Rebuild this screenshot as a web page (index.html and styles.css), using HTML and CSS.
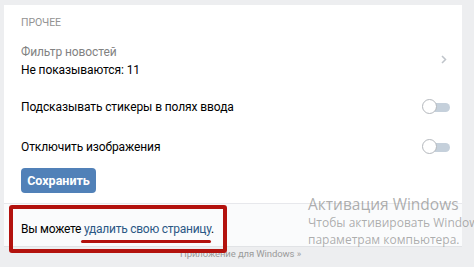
FILE: index.html
```html
<!DOCTYPE html>
<html lang="ru">
<head>
    <meta charset="UTF-8">
    <title>Настройки</title>
    <link rel="stylesheet" href="styles.css">
</head>
<body>
<div class="page">
    <div class="card">
        <div class="head">Прочее</div>
        <div class="row filter">
            <div>
                <div class="label">Фильтр новостей</div>
                <div class="value">Не показываются: 11</div>
            </div>
            <svg class="chevron" width="6" height="9" viewBox="0 0 6 9">
                <path d="M1 1l3.5 3.5L1 8" fill="none" stroke="#bfc4ca" stroke-width="1.5"/>
            </svg>
        </div>
        <div class="row toggle-row">
            <span>Подсказывать стикеры в полях ввода</span>
            <span class="toggle"><span class="knob"></span></span>
        </div>
        <div class="row toggle-row">
            <span>Отключить изображения</span>
            <span class="toggle"><span class="knob"></span></span>
        </div>
        <button class="save">Сохранить</button>
    </div>
    <div class="delete">
        Вы можете <a href="javascript:;">удалить свою страницу</a>.
    </div>
    <div class="footer">Приложение для Windows »</div>
</div>

<div class="mark-box"></div>
<div class="mark-line"></div>

<div class="activation">
    <div class="act-title">Активация Windows</div>
    <div class="act-text">Чтобы активировать Windows, перейдите к</div>
    <div class="act-text">параметрам компьютера.</div>
</div>
</body>
</html>
```

FILE: styles.css
```css
body {
    margin: 0;
    background-color: #edeef0;
    font-family: Roboto, "Liberation Sans", sans-serif;
    font-size: 12px;
    letter-spacing: -0.1px;
    color: #000;
    overflow: hidden;
}

a {
    text-decoration: none;
    color: #2a5885;
}

.page {
    padding: 5px 12px 0 4px;
}

.card {
    background-color: #fff;
    padding: 10px 12px 10px 17px;
}

.head {
    line-height: 16px;
    font-size: 10.5px;
    text-transform: uppercase;
    color: #939393;
}

.row {
    display: flex;
    align-items: center;
    justify-content: space-between;
}

.filter {
    margin-top: 12px;
    line-height: 18px;
}

.filter .label {
    color: #828282;
}

.chevron {
    margin-right: 3px;
    margin-bottom: 4px;
}

.toggle-row {
    height: 40px;
}

.filter + .toggle-row {
    margin-top: 8px;
}

.toggle {
    position: relative;
    width: 27px;
    height: 9px;
    border-radius: 5px;
    background-color: #c5d0db;
}

.toggle .knob {
    position: absolute;
    left: -1px;
    top: -4px;
    width: 13px;
    height: 13px;
    border: 1px solid #b4b8bd;
    border-radius: 50%;
    background-color: #fff;
}

.save {
    display: block;
    margin-top: 1px;
    width: 75px;
    height: 25px;
    padding: 0;
    border: 0;
    border-radius: 4px;
    background-color: #5181b8;
    color: #fff;
    font-family: Roboto, "Liberation Sans", sans-serif;
    font-size: 12.5px;
    font-weight: bold;
}

.delete {
    padding: 12px 0 4px 17px;
    line-height: 26px;
    letter-spacing: -0.25px;
    background-color: #fafbfc;
    border-top: 1px solid #e7e8ec;
    border-bottom: 1px solid #e1e3e6;
}

.footer {
    padding-left: 176px;
    line-height: 14px;
    font-size: 9.5px;
    color: #9a9a9a;
}

.mark-box {
    position: absolute;
    left: 9px;
    top: 205px;
    width: 210px;
    height: 40px;
    border: 4px solid #b3120e;
    border-radius: 3px;
}

.mark-line {
    position: absolute;
    left: 81px;
    top: 240px;
    width: 130px;
    height: 3px;
    border-radius: 2px;
    background-color: #b3120e;
}

.activation {
    position: absolute;
    left: 308px;
    top: 195px;
    white-space: nowrap;
    font-family: "Open Sans", "Noto Sans", sans-serif;
    letter-spacing: 0;
    color: rgba(120, 120, 120, 0.6);
}

.act-title {
    font-size: 15.5px;
    line-height: 19px;
}

.act-text {
    width: 166px;
    overflow: hidden;
    font-size: 12px;
    line-height: 17px;
}
```
